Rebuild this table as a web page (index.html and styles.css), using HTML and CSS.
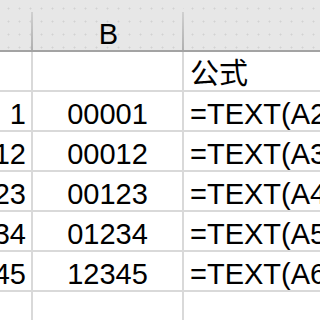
FILE: index.html
```html
<!DOCTYPE html>
<html>
<head>
<meta charset="utf-8">
<link rel="stylesheet" href="styles.css">
</head>
<body>
<div class="sheet">
  <div class="hd hd-a"></div>
  <div class="hd hd-b"><span>B</span></div>
  <div class="hd hd-c"></div>

  <div class="c a"></div><div class="c b"></div><div class="c f">公式</div>
  <div class="c a">1</div><div class="c b">00001</div><div class="c f">=TEXT(A2,"00000")</div>
  <div class="c a">12</div><div class="c b">00012</div><div class="c f">=TEXT(A3,"00000")</div>
  <div class="c a">123</div><div class="c b">00123</div><div class="c f">=TEXT(A4,"00000")</div>
  <div class="c a">1234</div><div class="c b">01234</div><div class="c f">=TEXT(A5,"00000")</div>
  <div class="c a">12345</div><div class="c b">12345</div><div class="c f">=TEXT(A6,"00000")</div>
  <div class="c a"></div><div class="c b"></div><div class="c f"></div>
</div>
</body>
</html>
```

FILE: styles.css
```css
html, body {
  margin: 0;
  padding: 0;
  background: #fff;
  width: 320px;
  height: 320px;
  overflow: hidden;
}
.sheet {
  display: grid;
  grid-template-columns: 33px 151px 136px;
  grid-template-rows: 52px repeat(7, 40px);
  font-family: "Liberation Sans", "Noto Sans CJK SC", sans-serif;
  font-size: 29px;
  line-height: 1;
  color: #000;
  width: 320px;
  overflow: hidden;
}
.hd {
  background-color: #e7e7e7;
  background-image: radial-gradient(circle, #d2d2d2 0.8px, transparent 1.2px);
  background-size: 11px 13px;
  background-position: 3px 2px;
  border-bottom: 2px solid #a3a3a3;
  position: relative;
  display: flex;
  align-items: flex-end;
  justify-content: center;
  padding-bottom: 1px;
}
.hd-a::after, .hd-b::after {
  content: "";
  position: absolute;
  right: 0;
  top: 12px;
  bottom: 0;
  width: 2px;
  background: linear-gradient(#d0d0d0, #b0b0b0);
}
.c {
  border-bottom: 2px solid #d9d9d9;
  display: flex;
  align-items: flex-end;
  padding-bottom: 1px;
  white-space: nowrap;
  overflow: hidden;
}
.a {
  border-right: 2px solid #d9d9d9;
  justify-content: flex-end;
  padding-right: 5px;
}
.b {
  border-right: 2px solid #d9d9d9;
  justify-content: center;
}
.f {
  padding-left: 6px;
}
```
